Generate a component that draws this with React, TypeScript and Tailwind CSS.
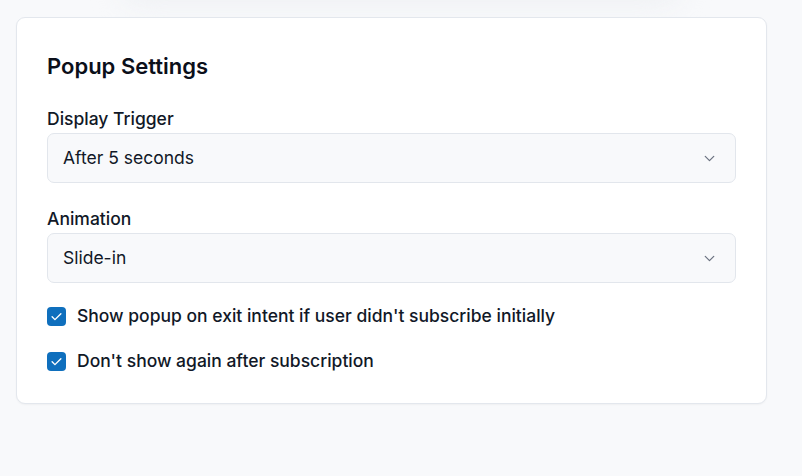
import React from "react";

function Chevron() {
  return (
    <svg width="17" height="17" viewBox="0 0 24 24" fill="none" stroke="#6b7280" strokeWidth="1.75" strokeLinecap="round" strokeLinejoin="round">
      <path d="M6 9l6 6 6-6" />
    </svg>
  );
}

function Check() {
  return (
    <span className="flex h-[19px] w-[19px] shrink-0 items-center justify-center rounded-[4px] bg-[#0f6fbd]">
      <svg width="15" height="15" viewBox="0 0 24 24" fill="none" stroke="white" strokeWidth="2.25" strokeLinecap="round" strokeLinejoin="round">
        <path d="M5 12.5l4.5 4.5L19 7.5" />
      </svg>
    </span>
  );
}

function Select({ value }: { value: string }) {
  return (
    <div className="flex h-[50px] items-center justify-between rounded-[7px] border border-[#e2e6ec] bg-[#f8f9fb] pl-[15px] pr-[17px]">
      <span className="pt-[1px] text-[17.5px] text-[#111827]">{value}</span>
      <Chevron />
    </div>
  );
}

export default function App() {
  return (
    <div className="relative min-h-[476px] w-full overflow-hidden bg-[#f8f9fb]" style={{ fontFamily: "Inter, 'Noto Sans', sans-serif" }}>
      <div className="pointer-events-none absolute left-[120px] right-[120px] top-[-40px] h-[44px] rounded-full bg-[#eef0f3] blur-[14px]" />
      <div className="relative px-[16px] pt-[17px]">
        <div className="w-[751px] rounded-[9px] border border-[#e3e7ed] bg-white px-[30px] pb-[29px] pt-[33px] shadow-[0_1px_2px_rgba(0,0,0,0.04)]">
          <h2 className="text-[22px] font-semibold leading-[30px] text-[#0b0f1a]">Popup Settings</h2>
          <div className="mt-[25px]">
            <div className="mb-[1px] text-[17.5px] font-medium leading-[26px] text-[#111827]">Display Trigger</div>
            <Select value="After 5 seconds" />
          </div>
          <div className="mt-[23px]">
            <div className="mb-[1px] text-[17.5px] font-medium leading-[26px] text-[#111827]">Animation</div>
            <Select value="Slide-in" />
          </div>
          <div className="mt-[20px] flex flex-col gap-[19px]">
            <label className="flex items-center gap-[11px]">
              <Check />
              <span className="text-[17.5px] font-medium leading-[26px] text-[#111827]">Show popup on exit intent if user didn't subscribe initially</span>
            </label>
            <label className="flex items-center gap-[11px]">
              <Check />
              <span className="text-[17.5px] font-medium leading-[26px] text-[#111827]">Don't show again after subscription</span>
            </label>
          </div>
        </div>
      </div>
    </div>
  );
}
